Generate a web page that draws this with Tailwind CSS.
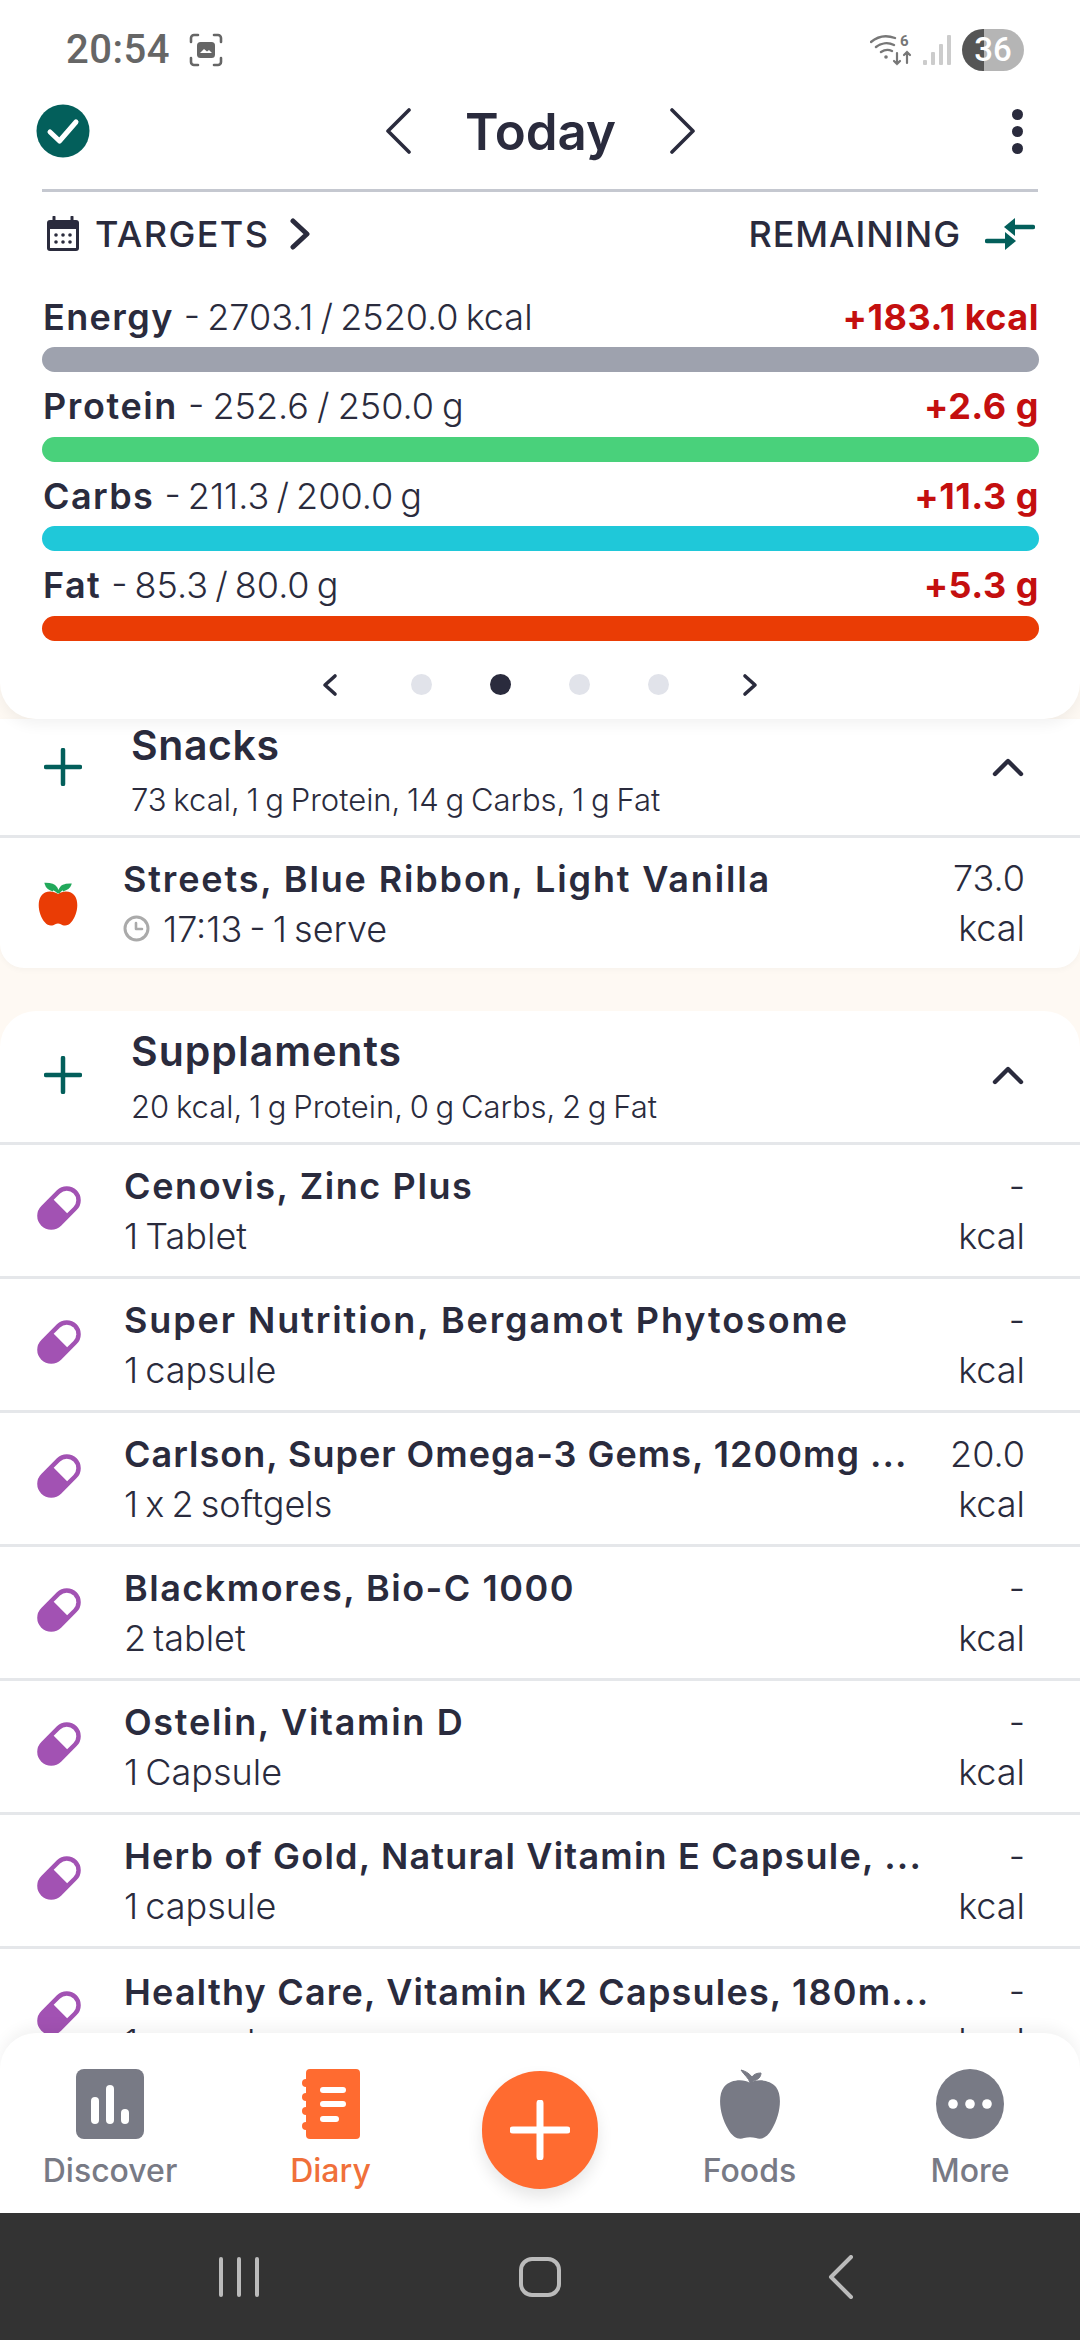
<!DOCTYPE html>
<html lang="en">
<head>
    <meta charset="UTF-8">
    <meta name="viewport" content="width=device-width, initial-scale=1.0">
    <title>Diary</title>
    <script src="https://cdn.jsdelivr.net/npm/@tailwindcss/browser@4"></script>
</head>
<body class="bg-[#fef9f3]">

<svg width="0" height="0" class="absolute">
    <symbol id="pill" viewBox="0 0 44 44">
        <g transform="rotate(-45 22 22)">
            <rect x="-3" y="8" width="50" height="28" rx="14" fill="#a252b3"/>
            <path d="M24 12.5H33a9.5 9.5 0 0 1 0 19H24z" fill="#fff"/>
        </g>
    </symbol>
    <symbol id="up" viewBox="0 0 32 20">
        <path d="M3 17L16 4l13 13" fill="none" stroke="#2a2b3d" stroke-width="4.4" stroke-linecap="round" stroke-linejoin="round"/>
    </symbol>
    <symbol id="plus" viewBox="0 0 38 38">
        <path d="M19 2v34M2 19h34" fill="none" stroke="#035f5b" stroke-width="4.5" stroke-linecap="round"/>
    </symbol>
</svg>

<div class="relative w-[1080px] h-[2340px] overflow-hidden flex flex-col font-['Inter','Noto_Sans',sans-serif] text-[#2a2b3d]">

    <!-- top card -->
    <div class="relative z-10 bg-white rounded-b-[36px] h-[719px] shrink-0 shadow-[0_6px_14px_rgba(0,0,0,0.05)]">
        <div class="h-[98px] flex items-center justify-between pl-[66px] pr-[56px] pt-[2px]">
            <div class="flex items-center gap-[18px]">
                <span class="font-['Roboto',sans-serif] font-medium text-[40px] text-[#666] tracking-[0.5px]">20:54</span>
                <svg width="36" height="36" viewBox="0 0 36 36" fill="none">
                    <path d="M3 10V6a3 3 0 0 1 3-3h4M26 3h4a3 3 0 0 1 3 3v4M33 26v4a3 3 0 0 1-3 3h-4M10 33H6a3 3 0 0 1-3-3v-4" stroke="#666" stroke-width="2.6" stroke-linecap="round"/>
                    <rect x="9" y="10" width="18" height="16" rx="3.5" fill="#666"/>
                    <path d="M12 21l4-4 3 2.5 2-1.5 3 3z" fill="#fff"/>
                </svg>
            </div>
            <div class="flex items-center gap-[10px]">
                <svg width="42" height="36" viewBox="0 0 42 36" fill="none" stroke="#777" stroke-linecap="round">
                    <path d="M1 10C8 4 17 3 25 6M6 15c5-4 12-5 18-2M11 20c3-2 7-3 11-1" stroke-width="2.4"/>
                    <circle cx="16" cy="25" r="1.8" fill="#777" stroke="none"/>
                    <path d="M27 21v11M24 29l3 3 3-3M37 31V20M34 23l3-3 3 3" stroke-width="2.2"/>
                    <text x="30" y="14" font-size="15" font-weight="700" fill="#777" stroke="none" font-family="Roboto">6</text>
                </svg>
                <svg width="30" height="32" viewBox="0 0 30 32" fill="#ccc">
                    <rect x="1" y="26" width="4" height="5" rx="1"/>
                    <rect x="9" y="18" width="4" height="13" rx="1"/>
                    <rect x="17" y="10" width="4" height="21" rx="1"/>
                    <rect x="25" y="1" width="4" height="30" rx="1"/>
                </svg>
                <div class="relative w-[62px] h-[42px] rounded-full overflow-hidden flex items-center justify-center bg-[linear-gradient(90deg,#555_0,#555_36%,#b5b5b5_36%)]">
                    <span class="font-['Roboto',sans-serif] font-medium text-[33px] text-white">36</span>
                </div>
            </div>
        </div>

        <div class="h-[66px] flex items-center justify-between pl-[36px] pr-[57px]">
            <svg width="54" height="54" viewBox="0 0 54 54">
                <circle cx="27" cy="27" r="26.5" fill="#035f5b"/>
                <path d="M14 28l9.5 9L40 18" fill="none" stroke="#fff" stroke-width="5" stroke-linecap="round" stroke-linejoin="round"/>
            </svg>
            <div class="flex items-center gap-[54px] ml-[-21px]">
                <svg width="26" height="46" viewBox="0 0 26 46" fill="none"><path d="M24 2L3 23l21 21" stroke="#2a2b3d" stroke-width="3.6" stroke-linecap="round" stroke-linejoin="round"/></svg>
                <span class="font-semibold text-[51px] leading-none">Today</span>
                <svg width="26" height="46" viewBox="0 0 26 46" fill="none"><path d="M2 2l21 21L2 44" stroke="#2a2b3d" stroke-width="3.6" stroke-linecap="round" stroke-linejoin="round"/></svg>
            </div>
            <div class="flex flex-col gap-[6px]">
                <span class="w-[11px] h-[11px] rounded-full bg-[#2a2b3d]"></span>
                <span class="w-[11px] h-[11px] rounded-full bg-[#2a2b3d]"></span>
                <span class="w-[11px] h-[11px] rounded-full bg-[#2a2b3d]"></span>
            </div>
        </div>

        <div class="mx-[42px] mt-[25px] h-[3px] bg-[#c5c8d0]"></div>

        <div class="h-[60px] mt-[12px] pl-[46px] pr-[46px] flex items-center justify-between">
            <div class="flex items-center">
                <svg width="34" height="36" viewBox="0 0 34 36" class="mr-[15px]">
                    <path d="M8 1v5M26 1v5" stroke="#2a2b3d" stroke-width="3" stroke-linecap="round"/>
                    <rect x="1" y="4" width="32" height="31" rx="3" fill="#2a2b3d"/>
                    <rect x="4" y="13" width="26" height="19" fill="#fff"/>
                    <g fill="#2a2b3d"><circle cx="10" cy="19" r="1.8"/><circle cx="17" cy="19" r="1.8"/><circle cx="24" cy="19" r="1.8"/><circle cx="10" cy="26" r="1.8"/><circle cx="17" cy="26" r="1.8"/><circle cx="24" cy="26" r="1.8"/></g>
                </svg>
                <span class="font-medium text-[36px] tracking-[1.4px]">TARGETS</span>
                <svg width="22" height="32" viewBox="0 0 22 32" fill="none" class="ml-[20px]"><path d="M4 3l14 13L4 29" stroke="#2a2b3d" stroke-width="5" stroke-linecap="round" stroke-linejoin="round"/></svg>
            </div>
            <div class="flex items-center">
                <span class="font-medium text-[36px] tracking-[0.9px]">REMAINING</span>
                <svg width="50" height="34" viewBox="0 0 50 34" class="ml-[24px] mr-[-1px]" fill="#035f5b">
                    <path d="M2 24h20" stroke="#035f5b" stroke-width="4.5" stroke-linecap="round"/>
                    <path d="M20 15l11 9-11 9z"/>
                    <path d="M28 10h20" stroke="#035f5b" stroke-width="4.5" stroke-linecap="round"/>
                    <path d="M30 1l-11 9 11 9z"/>
                </svg>
            </div>
        </div>

        <div class="mt-[33px] pl-[42px] pr-[41px] flex flex-col gap-[14.6px]">
            <div>
                <div class="h-[44px] flex items-center justify-between pl-[1px] pb-[5px] text-[36px]">
                    <span class="whitespace-nowrap"><b class="font-semibold tracking-[1.4px]">Energy</b> <span class="font-light [word-spacing:-3px]">- 2703.1 / 2520.0 kcal</span></span>
                    <span class="font-bold text-[#c40f0f] tracking-[0.5px]">+183.1 kcal</span>
                </div>
                <div class="h-[25px] mt-[6px] rounded-full bg-[#9ea2ae]"></div>
            </div>
            <div>
                <div class="h-[44px] flex items-center justify-between pl-[1px] pb-[5px] text-[36px]">
                    <span class="whitespace-nowrap"><b class="font-semibold tracking-[1.6px]">Protein</b> <span class="font-light [word-spacing:-2px]">- 252.6 / 250.0 g</span></span>
                    <span class="font-bold text-[#c40f0f] tracking-[0.5px]">+2.6 g</span>
                </div>
                <div class="h-[25px] mt-[6px] rounded-full bg-[#49d17b]"></div>
            </div>
            <div>
                <div class="h-[44px] flex items-center justify-between pl-[1px] pb-[5px] text-[36px]">
                    <span class="whitespace-nowrap"><b class="font-semibold tracking-[1.4px]">Carbs</b> <span class="font-light [word-spacing:-3px]">- 211.3 / 200.0 g</span></span>
                    <span class="font-bold text-[#c40f0f] tracking-[0.5px]">+11.3 g</span>
                </div>
                <div class="h-[25px] mt-[6px] rounded-full bg-[#1fc8d9]"></div>
            </div>
            <div>
                <div class="h-[44px] flex items-center justify-between pl-[1px] pb-[5px] text-[36px]">
                    <span class="whitespace-nowrap"><b class="font-semibold tracking-[1.4px]">Fat</b> <span class="font-light [word-spacing:-3px]">- 85.3 / 80.0 g</span></span>
                    <span class="font-bold text-[#c40f0f] tracking-[0.5px]">+5.3 g</span>
                </div>
                <div class="h-[25px] mt-[6px] rounded-full bg-[#ea3c05]"></div>
            </div>
        </div>

        <div class="mt-[22px] h-[44px] flex items-center justify-center">
            <svg width="16" height="24" viewBox="0 0 16 24" fill="none"><path d="M13 3L3 12l10 9" stroke="#2a2b3d" stroke-width="3.6" stroke-linecap="round" stroke-linejoin="round"/></svg>
            <span class="ml-[73px] w-[21px] h-[21px] rounded-full bg-[#e1e3ea]"></span>
            <span class="ml-[58px] w-[21px] h-[21px] rounded-full bg-[#2a2b3d]"></span>
            <span class="ml-[58px] w-[21px] h-[21px] rounded-full bg-[#e1e3ea]"></span>
            <span class="ml-[58px] w-[21px] h-[21px] rounded-full bg-[#e1e3ea]"></span>
            <svg width="16" height="24" viewBox="0 0 16 24" fill="none" class="ml-[73px]"><path d="M3 3l10 9-10 9" stroke="#2a2b3d" stroke-width="3.6" stroke-linecap="round" stroke-linejoin="round"/></svg>
        </div>
    </div>

    <!-- snacks -->
    <div class="bg-white rounded-b-[24px] shrink-0 shadow-[0_2px_6px_rgba(0,0,0,0.03)]">
        <div class="h-[119px] flex items-center border-b-[3px] border-[#e5e7ea] pl-[44px] pr-[56px]">
            <svg width="38" height="38" class="mb-[20px]"><use href="#plus"/></svg>
            <div class="ml-[49px] flex-1 mb-[14px]">
                <div class="font-semibold text-[41px] leading-[50px] tracking-[0.6px]">Snacks</div>
                <div class="font-light text-[31px] leading-[42px] mt-[9px] [word-spacing:-2px]">73 kcal, 1 g Protein, 14 g Carbs, 1 g Fat</div>
            </div>
            <svg width="32" height="20" class="mb-[20px]"><use href="#up"/></svg>
        </div>
        <div class="h-[130px] flex items-center pl-[37px] pr-[55px]">
            <svg width="42" height="47" viewBox="0 0 44 50">
                <path d="M22 15C17 11 8 11 4 17c-5 8-2 21 4 28 3 4 8 4 11 2 2-1 4-1 6 0 3 2 8 2 11-2 6-7 9-20 4-28-4-6-13-6-18-2z" fill="#ea3c05"/>
                <path d="M22 14c0-4-3-8-6-9-3-1-5-1-7-1 1 4 4 6 8 7M23 14c0-3 2-7 5-8 2-1 4-1 7-1-1 3-4 5-8 6" fill="#22a95b" stroke="#22a95b" stroke-width="2.4"/>
            </svg>
            <div class="ml-[44px] flex-1 min-w-0 pt-[1px]">
                <div class="font-semibold text-[36px] leading-[48px] tracking-[1.85px] whitespace-nowrap">Streets, Blue Ribbon, Light Vanilla</div>
                <div class="flex items-center font-light text-[36px] leading-[48px] mt-[2px] [word-spacing:-3px]">
                    <svg width="27" height="27" viewBox="0 0 27 27" fill="none" class="mr-[13px]"><circle cx="13.5" cy="13.5" r="11.5" stroke="#aaa" stroke-width="3"/><path d="M13 8v6h6" stroke="#aaa" stroke-width="2.6" stroke-linecap="round" stroke-linejoin="round"/></svg>
                    <span>17:13 - 1 serve</span>
                </div>
            </div>
            <div class="text-right font-light text-[36px] leading-[50px]">73.0<br>kcal</div>
        </div>
    </div>

    <!-- supplements -->
    <div class="mt-[43px] bg-white rounded-t-[36px] flex-1">
        <div class="h-[134px] flex items-center border-b-[3px] border-[#e5e7ea] pl-[44px] pr-[56px]">
            <svg width="38" height="38" class="mb-[4px]"><use href="#plus"/></svg>
            <div class="ml-[49px] flex-1">
                <div class="font-semibold text-[41px] leading-[50px] tracking-[1px]">Supplaments</div>
                <div class="font-light text-[31px] leading-[42px] mt-[10px] [word-spacing:-2px]">20 kcal, 1 g Protein, 0 g Carbs, 2 g Fat</div>
            </div>
            <svg width="32" height="20" class="mb-[4px]"><use href="#up"/></svg>
        </div>

        <div class="h-[134px] flex items-center border-b-[3px] border-[#e5e7ea] pl-[37px] pr-[55px]">
            <svg width="44" height="44" class="mb-[6px]"><use href="#pill"/></svg>
            <div class="ml-[43px] flex-1 min-w-0 pt-[1px]">
                <div class="font-semibold text-[36px] leading-[48px] tracking-[1.6px] whitespace-nowrap">Cenovis, Zinc Plus</div>
                <div class="font-light text-[36px] leading-[48px] mt-[2px] [word-spacing:-3px]">1 Tablet</div>
            </div>
            <div class="text-right font-light text-[36px] leading-[50px]">-<br>kcal</div>
        </div>
        <div class="h-[134px] flex items-center border-b-[3px] border-[#e5e7ea] pl-[37px] pr-[55px]">
            <svg width="44" height="44" class="mb-[6px]"><use href="#pill"/></svg>
            <div class="ml-[43px] flex-1 min-w-0 pt-[1px]">
                <div class="font-semibold text-[36px] leading-[48px] tracking-[1.9px] whitespace-nowrap">Super Nutrition, Bergamot Phytosome</div>
                <div class="font-light text-[36px] leading-[48px] mt-[2px] [word-spacing:-3px]">1 capsule</div>
            </div>
            <div class="text-right font-light text-[36px] leading-[50px]">-<br>kcal</div>
        </div>
        <div class="h-[134px] flex items-center border-b-[3px] border-[#e5e7ea] pl-[37px] pr-[55px]">
            <svg width="44" height="44" class="mb-[6px]"><use href="#pill"/></svg>
            <div class="ml-[43px] flex-1 min-w-0 pt-[1px]">
                <div class="font-semibold text-[36px] leading-[48px] tracking-[1px] whitespace-nowrap">Carlson, Super Omega-3 Gems, 1200mg ...</div>
                <div class="font-light text-[36px] leading-[48px] mt-[2px] [word-spacing:-3px] [font-variant-ligatures:no-contextual]">1 x 2 softgels</div>
            </div>
            <div class="text-right font-light text-[36px] leading-[50px]">20.0<br>kcal</div>
        </div>
        <div class="h-[134px] flex items-center border-b-[3px] border-[#e5e7ea] pl-[37px] pr-[55px]">
            <svg width="44" height="44" class="mb-[6px]"><use href="#pill"/></svg>
            <div class="ml-[43px] flex-1 min-w-0 pt-[1px]">
                <div class="font-semibold text-[36px] leading-[48px] tracking-[1.5px] whitespace-nowrap">Blackmores, Bio-C 1000</div>
                <div class="font-light text-[36px] leading-[48px] mt-[2px] [word-spacing:-3px]">2 tablet</div>
            </div>
            <div class="text-right font-light text-[36px] leading-[50px]">-<br>kcal</div>
        </div>
        <div class="h-[134px] flex items-center border-b-[3px] border-[#e5e7ea] pl-[37px] pr-[55px]">
            <svg width="44" height="44" class="mb-[6px]"><use href="#pill"/></svg>
            <div class="ml-[43px] flex-1 min-w-0 pt-[1px]">
                <div class="font-semibold text-[36px] leading-[48px] tracking-[1.7px] whitespace-nowrap">Ostelin, Vitamin D</div>
                <div class="font-light text-[36px] leading-[48px] mt-[2px] [word-spacing:-3px]">1 Capsule</div>
            </div>
            <div class="text-right font-light text-[36px] leading-[50px]">-<br>kcal</div>
        </div>
        <div class="h-[134px] flex items-center border-b-[3px] border-[#e5e7ea] pl-[37px] pr-[55px]">
            <svg width="44" height="44" class="mb-[6px]"><use href="#pill"/></svg>
            <div class="ml-[43px] flex-1 min-w-0 pt-[1px]">
                <div class="font-semibold text-[36px] leading-[48px] tracking-[1.2px] whitespace-nowrap">Herb of Gold, Natural Vitamin E Capsule, ...</div>
                <div class="font-light text-[36px] leading-[48px] mt-[2px] [word-spacing:-3px]">1 capsule</div>
            </div>
            <div class="text-right font-light text-[36px] leading-[50px]">-<br>kcal</div>
        </div>
        <div class="h-[134px] flex items-center pl-[37px] pr-[55px]">
            <svg width="44" height="44" class="mb-[6px]"><use href="#pill"/></svg>
            <div class="ml-[43px] flex-1 min-w-0 pt-[1px]">
                <div class="font-semibold text-[36px] leading-[48px] tracking-[1.2px] whitespace-nowrap">Healthy Care, Vitamin K2 Capsules, 180m...</div>
                <div class="font-light text-[36px] leading-[48px] mt-[2px] [word-spacing:-3px]">1 capsule</div>
            </div>
            <div class="text-right font-light text-[36px] leading-[50px]">-<br>kcal</div>
        </div>
    </div>

    <!-- bottom nav lies over the list -->
    <div class="absolute left-0 right-0 bottom-[127px] z-20 h-[180px] bg-white rounded-t-[36px] shadow-[0_-6px_14px_rgba(0,0,0,0.05)]">
        <div class="grid grid-cols-[220px_221px_198px_221px_220px] pt-[36px]">
            <div class="flex flex-col items-center">
                <svg width="68" height="70" viewBox="0 0 68 70">
                    <rect width="68" height="70" rx="8" fill="#787a85"/>
                    <rect x="15" y="28" width="8" height="27" rx="4" fill="#fff"/>
                    <rect x="30" y="16" width="8" height="39" rx="4" fill="#fff"/>
                    <rect x="45" y="40" width="8" height="15" rx="4" fill="#fff"/>
                </svg>
                <span class="mt-[12px] font-medium text-[32px] leading-[40px] text-[#787a85]">Discover</span>
            </div>
            <div class="flex flex-col items-center">
                <svg width="58" height="70" viewBox="0 0 58 70">
                    <path d="M8 0h46a4 4 0 0 1 4 4v62a4 4 0 0 1-4 4H8a4 4 0 0 1-4-4V4a4 4 0 0 1 4-4z" fill="#ff6b30"/>
                    <g fill="#ff6b30"><circle cx="4" cy="14" r="4"/><circle cx="4" cy="28" r="4"/><circle cx="4" cy="42" r="4"/><circle cx="4" cy="57" r="4"/></g>
                    <rect x="18" y="18" width="26" height="6" rx="3" fill="#fff"/>
                    <rect x="18" y="32" width="26" height="6" rx="3" fill="#fff"/>
                    <rect x="18" y="47" width="19" height="6" rx="3" fill="#fff"/>
                </svg>
                <span class="mt-[12px] font-medium text-[32px] leading-[40px] text-[#f0703a]">Diary</span>
            </div>
            <div class="flex justify-center">
                <div class="w-[116px] h-[118px] mt-[2px] rounded-full bg-[#ff6b30] flex items-center justify-center shadow-[0_8px_16px_rgba(0,0,0,0.10)]">
                    <svg width="60" height="60" viewBox="0 0 60 60"><path d="M30 3v54M3 30h54" stroke="#fff" stroke-width="7" stroke-linecap="round"/></svg>
                </div>
            </div>
            <div class="flex flex-col items-center">
                <svg width="62" height="70" viewBox="0 0 62 70">
                    <path d="M31 14C25 10 12 10 5 18c-7 9-4 29 4 42 5 9 11 11 16 9 4-1 8-1 12 0 5 2 11 0 16-9 8-13 11-33 4-42-7-8-20-8-26-4z" fill="#787a85"/>
                    <path d="M31 14c-1-5-6-8-9-13 4 1 8 3 11 7 2-3 5-4 9-4 0 4-3 7-8 8l-1 4z" fill="#787a85" stroke="#787a85"/>
                </svg>
                <span class="mt-[12px] font-medium text-[32px] leading-[40px] text-[#787a85]">Foods</span>
            </div>
            <div class="flex flex-col items-center">
                <svg width="68" height="70" viewBox="0 0 68 70">
                    <ellipse cx="34" cy="35" rx="34" ry="35" fill="#787a85"/>
                    <circle cx="17" cy="35" r="4.8" fill="#fff"/><circle cx="34" cy="35" r="4.8" fill="#fff"/><circle cx="51" cy="35" r="4.8" fill="#fff"/>
                </svg>
                <span class="mt-[12px] font-medium text-[32px] leading-[40px] text-[#787a85]">More</span>
            </div>
        </div>
    </div>

    <!-- android nav -->
    <div class="absolute left-0 right-0 bottom-0 z-20 h-[127px] bg-[#333333] grid grid-cols-3 px-[88px]">
        <div class="flex items-center justify-center">
            <svg width="42" height="42" viewBox="0 0 42 42" stroke="#bbb" stroke-width="4" stroke-linecap="round"><path d="M3 3v36M21 3v36M39 3v36"/></svg>
        </div>
        <div class="flex items-center justify-center">
            <svg width="42" height="42" viewBox="0 0 42 42" fill="none"><rect x="2" y="3" width="38" height="36" rx="11" stroke="#bbb" stroke-width="4"/></svg>
        </div>
        <div class="flex items-center justify-center">
            <svg width="26" height="44" viewBox="0 0 26 44" fill="none"><path d="M23 2L3 22l20 20" stroke="#bbb" stroke-width="4" stroke-linecap="round" stroke-linejoin="round"/></svg>
        </div>
    </div>
</div>

</body>
</html>
